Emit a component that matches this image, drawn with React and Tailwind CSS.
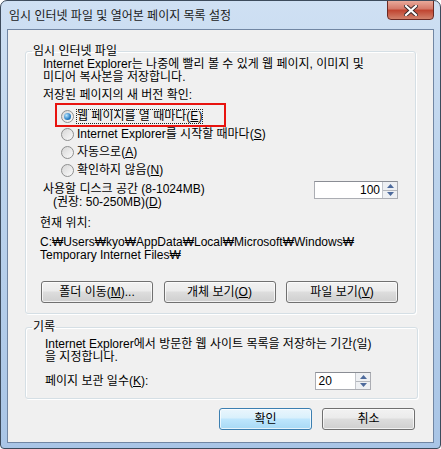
import React from "react";

const font = { fontFamily: '"Liberation Sans","Noto Sans CJK KR",sans-serif' };

function Radio({ checked }) {
  return (
    <span className="w-[13px] h-[13px] shrink-0 rounded-full border border-[#8e8f8f] bg-[linear-gradient(135deg,#d6d6d6,#fbfbfb)] flex items-center justify-center">
      {checked && (
        <span className="w-[7px] h-[7px] rounded-full bg-[radial-gradient(circle_at_35%_35%,#b8e6ff,#2a7fc4_60%,#0d4f8f)]" />
      )}
    </span>
  );
}

function Key({ k }) {
  return <span className="underline underline-offset-[1px]">{k}</span>;
}

function Btn({ children, primary, className = "" }) {
  return (
    <button
      className={
        "h-[22px] rounded-[3px] border text-[12px] text-black flex items-center justify-center shadow-[inset_0_0_0_1px_rgba(255,255,255,0.7)] " +
        (primary
          ? "border-[#3c7fb1] bg-[linear-gradient(#eaf6fd_0%,#d9f0fc_45%,#bee6fd_50%,#a7d9f5_100%)] "
          : "border-[#707070] bg-[linear-gradient(#f2f2f2_0%,#ebebeb_45%,#dddddd_50%,#cfcfcf_100%)] ") +
        className
      }
    >
      {children}
    </button>
  );
}

function Spin({ value, align = "right", className = "" }) {
  return (
    <div className={"flex h-[18px] border border-[#abadb3] border-t-[#8a8d94] bg-white " + className}>
      <div className={"flex-1 leading-[16px] text-[12px] px-[2px] " + (align === "right" ? "text-right" : "text-left")}>
        {value}
      </div>
      <div className="w-[15px] flex flex-col border-l border-[#c3c6cc] bg-[#eef0f3]">
        <div className="flex-1 flex items-center justify-center border-b border-[#b4b7bd]">
          <svg width="7" height="4" viewBox="0 0 7 4"><path d="M0 4 L3.5 0 L7 4Z" fill="#4d6a9c" /></svg>
        </div>
        <div className="flex-1 flex items-center justify-center">
          <svg width="7" height="4" viewBox="0 0 7 4"><path d="M0 0 L3.5 4 L7 0Z" fill="#4d6a9c" /></svg>
        </div>
      </div>
    </div>
  );
}

export default function App() {
  return (
    <div
      style={font}
      className="w-[441px] h-[449px] border border-[#3d4b5c] rounded-t-[7px] rounded-b-[4px] bg-[linear-gradient(#cfe0f3,#bcd3ec_40%,#a9c5e6)] flex flex-col text-black overflow-hidden"
    >
      {/* Title bar */}
      <div className="h-[28px] flex shrink-0">
        <div className="self-center pl-[8px] pt-[1px] text-[12px] text-[#1a1a1a]">
          임시 인터넷 파일 및 열어본 페이지 목록 설정
        </div>
        <div className="ml-auto mr-[6px] -mt-px w-[47px] h-[20px] rounded-b-[4px] border border-[#6b2a24] bg-[linear-gradient(#e9a99a,#d47767_45%,#c0432f_50%,#d2826c)] flex items-center justify-center">
          <svg width="14" height="11" viewBox="0 0 14 11">
            <path d="M2 1 L12 10 M12 1 L2 10" stroke="#3b2a2a" strokeWidth="4" strokeLinecap="square" />
            <path d="M2 1 L12 10 M12 1 L2 10" stroke="#ffffff" strokeWidth="2.2" strokeLinecap="square" />
          </svg>
        </div>
      </div>

      {/* Client area */}
      <div className="mx-[6px] h-[414px] border border-[#7186a3] bg-[#f0f0f0] text-[12px] flex flex-col">
        <fieldset className="mx-[17px] mt-[15px] p-0 border border-[#d5dfe5] rounded-[3px] shadow-[inset_1px_1px_0_#fff,1px_1px_0_#fff]">
          <legend className="ml-[6px] px-[1px] leading-[13px]">임시 인터넷 파일</legend>
          <div className="pl-[14px] pr-[17px] pb-[10px]">
            <div className="pl-[3px] leading-[13px]">
              <div>Internet Explorer는 나중에 빨리 볼 수 있게 웹 페이지, 이미지 및</div>
              <div>미디어 복사본을 저장합니다.</div>
              <div className="mt-[5px]">저장된 페이지의 새 버전 확인:</div>
            </div>
            <div className="ml-[21px] mt-[5px] flex flex-col">
              <div className="relative h-[18px] flex items-center gap-[2px]">
                <span className="absolute -left-[6px] -top-[4px] w-[171px] h-[24px] border-2 border-[#e8130f]" />
                <Radio checked />
                <span className="outline-1 outline-dotted outline-[#222] leading-[13px] ml-[1px]">
                  웹 페이지를 열 때마다(<Key k="E" />)
                </span>
              </div>
              <div className="h-[18px] flex items-center gap-[3px]">
                <Radio />
                <span>Internet Explorer를 시작할 때마다(<Key k="S" />)</span>
              </div>
              <div className="h-[18px] flex items-center gap-[3px]">
                <Radio />
                <span>자동으로(<Key k="A" />)</span>
              </div>
              <div className="h-[18px] flex items-center gap-[3px]">
                <Radio />
                <span>확인하지 않음(<Key k="N" />)</span>
              </div>
            </div>
            <div className="mt-[4px] flex items-start">
              <div className="pl-[3px] leading-[13px]">
                <div>사용할 디스크 공간 (8-1024MB)</div>
                <div className="pl-[10px]">(권장: 50-250MB)(<Key k="D" />)</div>
              </div>
              <Spin value="100" className="ml-auto -mt-[2px] w-[84px]" />
            </div>
            <div className="mt-[8px] leading-[13px]">
              <div>현재 위치:</div>
              <div className="mt-[6px]">C:₩Users₩kyo₩AppData₩Local₩Microsoft₩Windows₩</div>
              <div>Temporary Internet Files₩</div>
            </div>
            <div className="mt-[19px] flex justify-between pl-[1px]">
              <Btn className="w-[112px]">폴더 이동(<Key k="M" />)...</Btn>
              <Btn className="w-[112px]">개체 보기(<Key k="O" />)</Btn>
              <Btn className="w-[112px]">파일 보기(<Key k="V" />)</Btn>
            </div>
          </div>
        </fieldset>

        <fieldset className="mx-[17px] mt-[7px] p-0 border border-[#d5dfe5] rounded-[3px] shadow-[inset_1px_1px_0_#fff,1px_1px_0_#fff]">
          <legend className="ml-[6px] px-[1px] leading-[13px]">기록</legend>
          <div className="pl-[19px] pr-[46px] pb-[8px]">
            <div className="leading-[13px] pt-[4px] whitespace-nowrap">
              <div>Internet Explorer에서 방문한 웹 사이트 목록을 저장하는 기간(일)</div>
              <div>을 지정합니다.</div>
            </div>
            <div className="mt-[8px] flex items-center">
              <span>페이지 보관 일수(<Key k="K" />):</span>
              <Spin value="20" align="left" className="ml-auto w-[56px]" />
            </div>
          </div>
        </fieldset>

        <div className="mt-[9px] mr-[18px] flex justify-end gap-[10px]">
          <Btn primary className="w-[93px]">확인</Btn>
          <Btn className="w-[93px]">취소</Btn>
        </div>
      </div>
    </div>
  );
}
